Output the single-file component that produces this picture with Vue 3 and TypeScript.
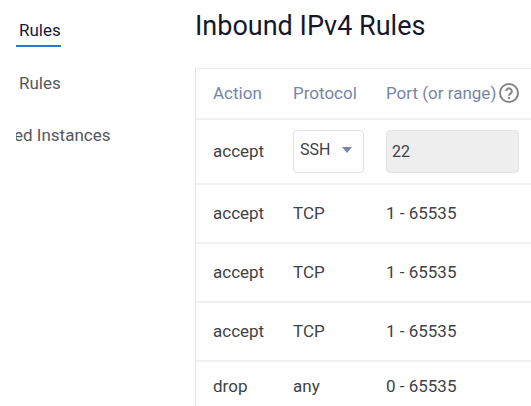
<script setup lang="ts">
import { ref } from 'vue'

interface Rule {
  action: string
  protocol: string
  ports: string
}

const protocol = ref('SSH')
const port = ref('22')

const rules: Rule[] = [
  { action: 'accept', protocol: 'TCP', ports: '1 - 65535' },
  { action: 'accept', protocol: 'TCP', ports: '1 - 65535' },
  { action: 'accept', protocol: 'TCP', ports: '1 - 65535' },
  { action: 'drop', protocol: 'any', ports: '0 - 65535' },
]
</script>

<template>
  <div class="page">
    <nav class="side">
      <a class="link active" href="#ipv4">Rules</a>
      <a class="link" href="#ipv6">Rules</a>
      <a class="link clipped" href="#instances">ed Instances</a>
    </nav>
    <main class="content">
      <h1>Inbound IPv4 Rules</h1>
      <table>
        <colgroup>
          <col class="col-action" />
          <col class="col-protocol" />
          <col />
        </colgroup>
        <thead>
          <tr>
            <th scope="col">Action</th>
            <th scope="col">Protocol</th>
            <th scope="col">
              <span class="port-head">
                Port (or range)
                <svg class="help" viewBox="0 0 20 20" aria-hidden="true">
                  <circle cx="10" cy="10" r="9" />
                  <path d="M7.2 8.1a2.8 2.8 0 1 1 4.7 2.1c-1.1 1-1.9 1.3-1.9 2.6" />
                  <path d="M10 14v2" />
                </svg>
              </span>
            </th>
          </tr>
        </thead>
        <tbody>
          <tr class="edit">
            <td>accept</td>
            <td class="control">
              <span class="picker">
                <select v-model="protocol" aria-label="Protocol">
                  <option>SSH</option>
                </select>
                <svg class="caret" viewBox="0 0 10 6" aria-hidden="true">
                  <path d="M0 0h10L5 6z" />
                </svg>
              </span>
            </td>
            <td class="control">
              <input v-model="port" type="text" aria-label="Port (or range)" disabled />
            </td>
          </tr>
          <tr v-for="(rule, i) in rules" :key="i" class="rule">
            <td>{{ rule.action }}</td>
            <td>{{ rule.protocol }}</td>
            <td>{{ rule.ports }}</td>
          </tr>
        </tbody>
      </table>
    </main>
  </div>
</template>

<style>
body {
  background: #fff;
  overflow: hidden;
}
</style>

<style scoped>
.page {
  display: grid;
  grid-template-columns: 179px minmax(0, 1fr);
  padding-left: 16px;
  font-family: Roboto, "Liberation Sans", sans-serif;
  font-size: 17px;
  line-height: 24px;
  color: #3f4246;
}

.side {
  display: flex;
  flex-direction: column;
  align-items: flex-start;
  gap: 24px;
  padding-top: 18px;
  overflow: hidden;
}

.link {
  padding: 0 0 4px 3px;
  color: #55585b;
  text-decoration: none;
}

.link.active {
  padding-bottom: 3px;
  border-bottom: 2px solid #1f78e6;
  color: #15173c;
}

.link.clipped {
  padding-left: 0;
  text-indent: -2px;
}

h1 {
  margin: 0;
  padding: 10px 0 26px;
  font-size: 27px;
  line-height: 32px;
  font-weight: 400;
  color: #15182b;
}

table {
  width: 100%;
  table-layout: fixed;
  border-collapse: separate;
  border-spacing: 0;
  border-top: 1px solid #ebebed;
  border-left: 1px solid #e4e5e8;
}

.col-action {
  width: 80px;
}

.col-protocol {
  width: 93px;
}

th,
td {
  box-sizing: border-box;
  padding: 0 0 2px 17px;
  border-bottom: 2px solid #f1f1f2;
  text-align: left;
  vertical-align: middle;
  font-weight: 400;
  white-space: nowrap;
}

th {
  height: 51px;
  color: #7685a8;
}

.port-head {
  display: flex;
  align-items: center;
  gap: 3px;
}

.help {
  width: 20px;
  height: 20px;
  flex: none;
  fill: none;
  stroke: #858585;
  stroke-width: 2;
}

.edit td {
  height: 65px;
}

.edit .control {
  padding-bottom: 0;
}

.edit .control:last-child {
  padding-right: 12px;
}

.rule td {
  height: 59px;
}

.rule:last-child td {
  height: 52px;
}

.picker {
  display: grid;
  align-items: center;
  width: 71px;
}

select,
input {
  box-sizing: border-box;
  width: 100%;
  height: 43px;
  margin: 0;
  border: 1px solid #e2e3e5;
  border-radius: 4px;
  font: inherit;
  font-size: 16px;
  color: #3f4246;
}

select {
  grid-area: 1 / 1;
  padding: 0 24px 4px 6px;
  appearance: none;
  background: #fff;
}

.caret {
  grid-area: 1 / 1;
  justify-self: end;
  width: 10px;
  height: 6px;
  margin: 0 12px 4px 0;
  fill: #7685a8;
  pointer-events: none;
}

input {
  display: block;
  padding: 0 5px;
  background: #eee;
}
</style>
